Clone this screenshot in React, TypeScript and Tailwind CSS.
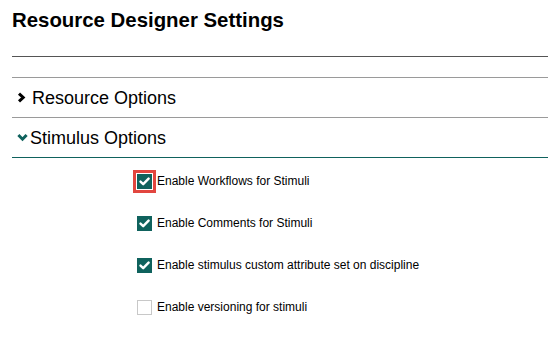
import React from 'react';

const TEAL = '#0f625d';

const options = [
  { label: 'Enable Workflows for Stimuli', checked: true, focused: true },
  { label: 'Enable Comments for Stimuli', checked: true },
  { label: 'Enable stimulus custom attribute set on discipline', checked: true },
  { label: 'Enable versioning for stimuli', checked: false },
];

function Check({ checked, focused }: { checked: boolean; focused?: boolean }) {
  return (
    <span
      className={
        'flex h-[15px] w-[15px] shrink-0 items-center justify-center ' +
        (checked ? 'bg-[#0f625d]' : 'border border-[#c8c8c8] bg-white') +
        (focused ? ' outline-[3px] outline-solid outline-[#e2463f] outline-offset-[1px]' : '')
      }
    >
      {checked && (
        <svg width="11" height="9" viewBox="0 0 11 9" fill="none">
          <polyline points="1.5,4.6 4.2,7.2 9.6,1.6" stroke="white" strokeWidth="2.4" strokeLinecap="round" strokeLinejoin="round" />
        </svg>
      )}
    </span>
  );
}

export default function App() {
  return (
    <div className="min-h-[339px] bg-white pl-[12px] font-['Liberation_Sans',Arial,sans-serif] text-black">
      {/* header */}
      <h1 className="pt-[8px] text-[20.4px] font-bold leading-[24px]">Resource Designer Settings</h1>
      <div className="mt-[24px] h-px bg-[#555]" />

      {/* accordion */}
      <div className="mt-[20px] border-t border-[#9a9a9a]">
        <div className="flex h-[39px] items-center pl-[5px]">
          <svg width="9" height="11" viewBox="0 0 9 11" className="mr-[6px]">
            <polyline points="2,1.6 6.2,5.5 2,9.4" fill="none" stroke="#000" strokeWidth="3" />
          </svg>
          <span className="text-[18px] leading-none">Resource Options</span>
        </div>
        <div className="flex h-[40px] items-center border-t border-[#9a9a9a] pl-[5px]">
          <svg width="11" height="9" viewBox="0 0 11 9" className="mr-[2px]">
            <polyline points="1.4,2 5.5,6.2 9.6,2" fill="none" stroke={TEAL} strokeWidth="3" />
          </svg>
          <span className="text-[18px] leading-none">Stimulus Options</span>
        </div>
        <div className="h-px bg-[#0f625d]" />

        <div className="pt-[2px] pl-[125px]">
          {options.map((o) => (
            <label key={o.label} className="flex h-[42px] items-center gap-[5px] text-[12px]">
              <Check checked={o.checked} focused={o.focused} />
              <span>{o.label}</span>
            </label>
          ))}
        </div>
      </div>
    </div>
  );
}
